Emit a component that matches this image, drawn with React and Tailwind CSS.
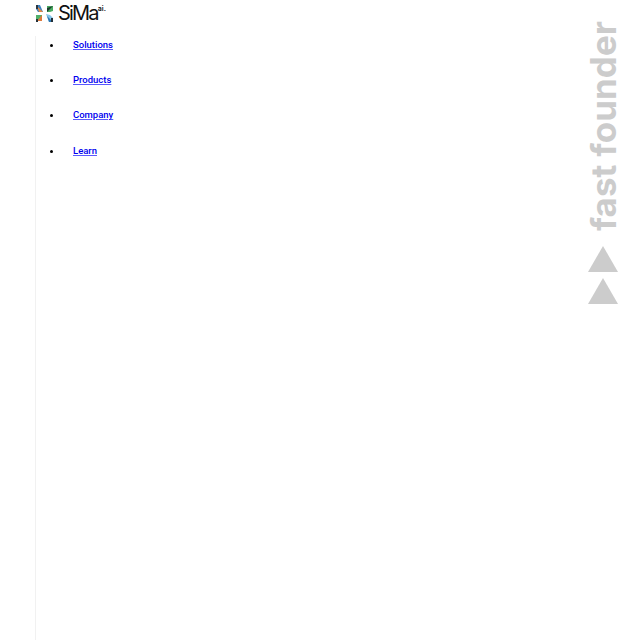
const links = ["Solutions", "Products", "Company", "Learn"];

function Logo() {
  return (
    <div className="flex items-center h-[24px]">
      <svg width="18" height="17" viewBox="0 0 18 17" className="mt-[1px]">
        <path d="M0 0h4l3 7H2L0 4z" fill="#3b82c4" />
        <path d="M1 1l6 6H3z" fill="#e58a45" />
        <path d="M0 0h2v4H0z" fill="#2a3640" />
        <path d="M11 1h6v5l-3 1h-3z" fill="#49ad63" />
        <path d="M17 1l-6 6V3z" fill="#1e3d2e" />
        <path d="M0 10h6v6H0z" fill="#4fb06a" />
        <path d="M1 16l5-6v6z" fill="#dd7a3e" />
        <path d="M0 14h2v3H0z" fill="#26323a" />
        <path d="M10 9l4 1 3 3v4h-4z" fill="#85c6ea" />
        <path d="M17 17l-6-6 2 6z" fill="#2f78b2" />
        <path d="M15 13h2v4h-2z" fill="#22303a" />
      </svg>
      <span className="ml-[4px] text-[20px] leading-none tracking-[-1.8px] text-[#111] font-['Inter',sans-serif]">SiMa</span>
      <span className="mb-[9px] text-[7px] leading-none font-semibold text-[#111] font-['Inter',sans-serif]">ai.</span>
    </div>
  );
}

export default function App() {
  return (
    <div className="relative min-h-[640px] bg-white font-['Inter',sans-serif]">
      <header className="h-[36px] pl-[36px] pt-px">
        <Logo />
      </header>

      <ul className="ml-[35px] h-[604px] border-l border-[#f1f1f1] pl-[14px]">
        {links.map((l) => (
          <li key={l} className="flex h-[35.2px] items-start text-[9.5px] font-medium leading-[18px] font-['Roboto',sans-serif]">
            <span className="mt-[8px] h-[3px] w-[3px] rounded-full bg-black" />
            <a href="#" className="ml-[20px] text-[#0000ee] underline decoration-[#5a5aff]">{l}</a>
          </li>
        ))}
      </ul>

      <div className="absolute top-[21px] right-[21px] flex flex-col items-center gap-[15px]">
        <span className="[writing-mode:vertical-rl] rotate-180 text-[35px] leading-[32px] font-bold text-[#cccccc]">
          fast founder
        </span>
        <svg width="30" height="58" viewBox="0 0 30 58">
          <path d="M15 0L30 26H0z" fill="#cccccc" />
          <path d="M15 32L30 58H0z" fill="#cccccc" />
        </svg>
      </div>
    </div>
  );
}
